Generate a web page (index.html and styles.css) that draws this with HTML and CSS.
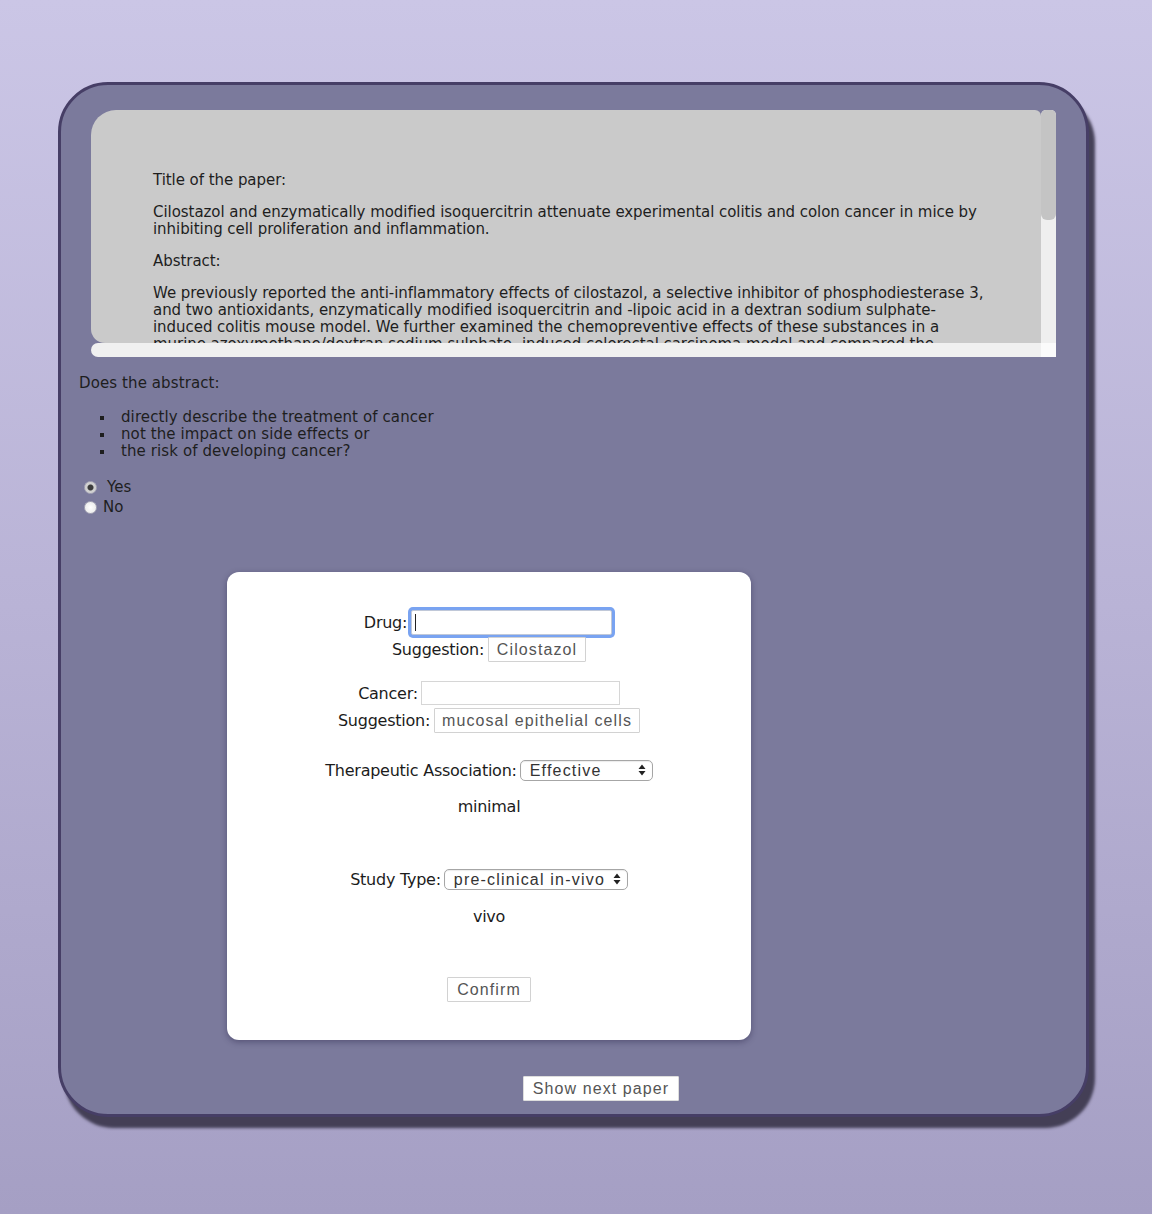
FILE: index.html
```html
<!DOCTYPE html>
<html lang="en">
<head>
<meta charset="utf-8">
<title>Paper annotation</title>
<link rel="stylesheet" href="styles.css">
</head>
<body>
<main class="panel">
  <section class="paper">
    <div class="paper-text">
      <p>Title of the paper:</p>
      <p>Cilostazol and enzymatically modified isoquercitrin attenuate experimental colitis and colon cancer in mice by<br>inhibiting cell proliferation and inflammation.</p>
      <p>Abstract:</p>
      <p>We previously reported the anti-inflammatory effects of cilostazol, a selective inhibitor of phosphodiesterase 3,<br>and two antioxidants, enzymatically modified isoquercitrin and -lipoic acid in a dextran sodium sulphate-<br>induced colitis mouse model. We further examined the chemopreventive effects of these substances in a<br>murine azoxymethane/dextran sodium sulphate- induced colorectal carcinoma model and compared the<br>effects with those of the reference compound. Mice were fed diets containing cilostazol, enzymatically modified isoquercitrin or -lipoic acid during and after the dextran sodium sulphate treatment, and colonic lesions were examined histopathologically. Cilostazol and enzymatically modified isoquercitrin reduced the multiplicity of colonic mucosal ulcers, dysplasias and adenocarcinomas, and decreased the number of proliferating cell nuclear antigen-positive cells in the colonic mucosa. The expression of inflammatory cytokines in the colonic mucosa was also suppressed.</p>
    </div>
    <div class="vscroll"><div class="vthumb"></div></div>
    <div class="hscroll"></div>
    <div class="corner"></div>
  </section>

  <section class="question">
    <p>Does the abstract:</p>
    <ul>
      <li>directly describe the treatment of cancer</li>
      <li>not the impact on side effects or</li>
      <li>the risk of developing cancer?</li>
    </ul>
    <div class="radios">
      <label class="radio yes"><input type="radio" name="answer" checked>Yes</label>
      <label class="radio no"><input type="radio" name="answer">No</label>
    </div>
  </section>

  <form class="card">
    <div class="row drug-row">
      <label class="lbl" for="drug">Drug:</label>
      <span class="field focused"><span class="caret"></span></span>
    </div>
    <div class="row sugg-row">
      <span class="lbl">Suggestion:</span>
      <button type="button" class="btn">Cilostazol</button>
    </div>

    <div class="row cancer-row">
      <label class="lbl" for="cancer">Cancer:</label>
      <input id="cancer" class="field" type="text">
    </div>
    <div class="row sugg-row2">
      <span class="lbl">Suggestion:</span>
      <button type="button" class="btn">mucosal epithelial cells</button>
    </div>

    <div class="row assoc-row">
      <label class="lbl" for="assoc">Therapeutic Association:</label>
      <span class="select-wrap">
        <select id="assoc" class="select select-assoc">
          <option>Effective</option>
          <option>Ineffective</option>
          <option>minimal</option>
        </select>
        <svg class="arrows" width="8" height="12" viewBox="0 0 8 12"><path d="M4 0.5 L7.5 5 H0.5 Z M4 11.5 L7.5 7 H0.5 Z" fill="#222"/></svg>
      </span>
    </div>
    <p class="note note-min">minimal</p>

    <div class="row study-row">
      <label class="lbl" for="study">Study Type:</label>
      <span class="select-wrap">
        <select id="study" class="select select-study">
          <option>pre-clinical in-vivo</option>
          <option>pre-clinical in-vitro</option>
          <option>clinical</option>
        </select>
        <svg class="arrows" width="8" height="12" viewBox="0 0 8 12"><path d="M4 0.5 L7.5 5 H0.5 Z M4 11.5 L7.5 7 H0.5 Z" fill="#222"/></svg>
      </span>
    </div>
    <p class="note note-vivo">vivo</p>

    <button type="button" class="btn confirm">Confirm</button>
  </form>

  <div class="next">
    <button type="button" class="btn next-btn">Show next paper</button>
  </div>
</main>
</body>
</html>
```

FILE: styles.css
```css
html, body {
  margin: 0;
  padding: 0;
}

body {
  min-height: 1214px;
  background: linear-gradient(180deg, #cbc6e6 0%, #b9b3d6 50%, #a59fc4 100%);
  font-family: "DejaVu Sans", "Liberation Sans", sans-serif;
  font-size: 15px;
  line-height: 17px;
  color: #1e1e1e;
  overflow: hidden;
}

.panel {
  box-sizing: border-box;
  width: 1031px;
  height: 1035px;
  margin: 82px 0 0 58px;
  padding: 25px 30px 0 30px;
  background: #7b7a9c;
  border: 3px solid #463e66;
  border-radius: 50px;
  box-shadow: 6px 11px 3px rgba(62, 58, 80, 0.95);
  display: flex;
  flex-direction: column;
}

/* paper text box with drawn scrollbars */
.paper {
  height: 247px;
  display: grid;
  grid-template-columns: 1fr 15px;
  grid-template-rows: 233px 14px;
}

.paper-text {
  box-sizing: border-box;
  padding: 47px 20px 0 62px;
  background: #cacaca;
  border-radius: 25px 6px 0 14px;
  overflow: hidden;
  letter-spacing: -0.05px;
  white-space: nowrap;
}

.paper-text p {
  margin: 15px 0;
  white-space: normal;
}

.vscroll {
  background: #efefef;
  border-radius: 5px 5px 0 0;
  overflow: hidden;
}

.vthumb {
  height: 110px;
  background: #c4c4c4;
  border-radius: 0 0 6px 6px;
}

.hscroll {
  background: #f0f0f0;
  border-radius: 7px 0 0 7px;
}

.corner {
  background: #fbfbfb;
}

/* question */
.question {
  margin: 18px 0 0 -12px;
  letter-spacing: 0.1px;
}

.question p {
  margin: 0;
}

.question ul {
  margin: 17px 0;
  padding-left: 42px;
  list-style: none;
}

.question li {
  position: relative;
}

.question li::before {
  content: "";
  position: absolute;
  left: -21px;
  top: 7px;
  width: 4px;
  height: 4px;
  background: #1e1e1e;
}

.radios {
  display: flex;
  flex-direction: column;
  margin-left: 5px;
}

.radio {
  display: flex;
  align-items: center;
  height: 20px;
}

.radio input {
  -webkit-appearance: none;
  appearance: none;
  box-sizing: border-box;
  width: 13px;
  height: 13px;
  margin: 0 10px 0 0;
  border-radius: 50%;
  border: 1px solid #a9a8b8;
  background: radial-gradient(circle, #f4f4f4 0%, #dcdcdc 100%);
}

.radio.no input {
  margin-right: 6px;
  background: radial-gradient(circle, #ffffff 0%, #e6e6e6 100%);
}

.radio input:checked {
  background: radial-gradient(circle, #3c3c3c 0 2.5px, #cfcfcf 3.5px, #d8d8d8 100%);
}

/* card */
.card {
  box-sizing: border-box;
  width: 524px;
  height: 468px;
  margin: 55px 0 0 136px;
  padding: 35px 0 0 0;
  background: #ffffff;
  border-radius: 12px;
  box-shadow: 0 2px 6px rgba(40, 36, 70, 0.45);
  display: flex;
  flex-direction: column;
  align-items: center;
  font-size: 16px;
}

.row {
  display: flex;
  align-items: center;
  gap: 3px;
}

.lbl {
  letter-spacing: -0.25px;
  color: #1c1c1c;
}

.field {
  box-sizing: border-box;
  display: block;
  font: 15px "Liberation Sans", sans-serif;
  border: 1px solid #d6d6d6;
  background: #fff;
  outline: none;
}

.drug-row {
  height: 30px;
}

.drug-row .field {
  width: 201px;
  height: 25px;
  margin: 2px 2px 2px 1px;
  border-color: #c0c8d8;
  box-shadow: 0 0 0 3px #79a3f1;
  border-radius: 2px;
  padding: 3px 0 0 3px;
}

.caret {
  display: block;
  width: 1px;
  height: 17px;
  background: #222;
}

.cancer-row {
  margin-top: 19px;
}

.cancer-row .field {
  width: 199px;
  height: 24px;
}

.sugg-row .lbl,
.sugg-row2 .lbl {
  margin-right: 1px;
}

.sugg-row2 {
  margin-top: 3px;
}

.btn {
  box-sizing: border-box;
  height: 25px;
  padding: 0 6px;
  font-family: "Liberation Sans", sans-serif;
  font-size: 16px;
  letter-spacing: 1.1px;
  color: #555;
  background: #fff;
  border: 1px solid #d2d2d2;
  border-radius: 1px;
  cursor: pointer;
}

.sugg-row .btn {
  width: 98px;
}

.sugg-row2 .btn {
  width: 206px;
}

.assoc-row {
  margin-top: 27px;
}

.select-wrap {
  position: relative;
  display: inline-flex;
}

.select {
  -webkit-appearance: none;
  appearance: none;
  box-sizing: border-box;
  height: 21px;
  padding: 0 0 0 9px;
  font-family: "Liberation Sans", sans-serif;
  font-size: 16px;
  letter-spacing: 1.2px;
  color: #333;
  background: #fff;
  border: 1px solid #a6a6a6;
  border-radius: 5px;
  box-shadow: inset 0 1px 1px rgba(0, 0, 0, 0.08);
  outline: none;
}

.select-assoc {
  width: 133px;
}

.select-study {
  width: 184px;
}

.arrows {
  position: absolute;
  right: 7px;
  top: 4px;
  pointer-events: none;
}

.note {
  margin: 17px 0 0;
  color: #1c1c1c;
  letter-spacing: -0.25px;
}

.study-row {
  margin-top: 54px;
}

.note-vivo {
  margin-top: 18px;
}

.confirm {
  margin-top: 52px;
  width: 84px;
}

.next {
  margin: 36px 0 0 432px;
}

.next-btn {
  width: 156px;
  border-color: #ddd;
}
```
